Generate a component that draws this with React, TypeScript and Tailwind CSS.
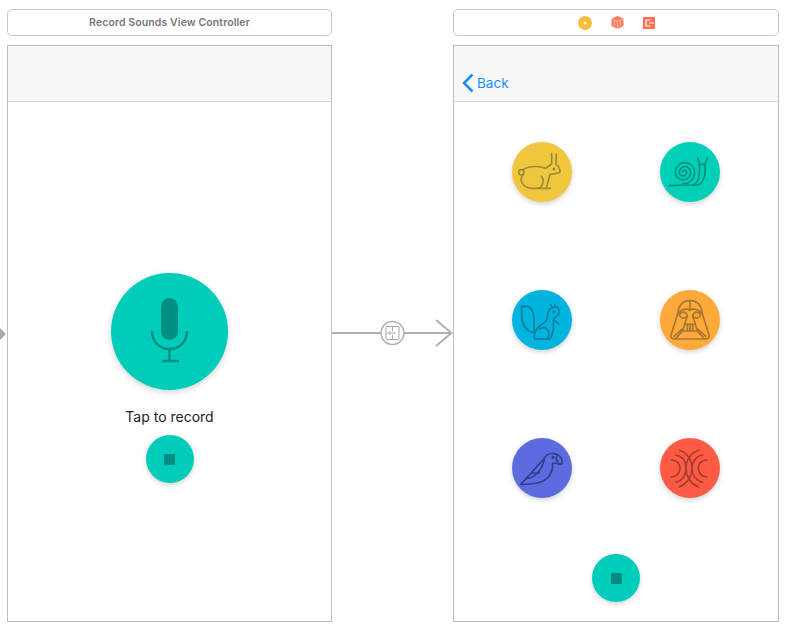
const font = { fontFamily: '"Inter", "Liberation Sans", sans-serif' };

type IconProps = { color: string };

function Rabbit({ color }: IconProps) {
  return (
    <svg viewBox="24 21 180 180" className="w-[60px] h-[60px]" fill="none" stroke={color} strokeWidth="5" strokeLinecap="round" strokeLinejoin="round">
      <circle cx="52" cy="112" r="8" />
      <path d="M58 104C75 92 105 92 125 100C132 96 138 90 143 87L143 55" />
      <path d="M157 58L156 88C164 93 168 102 168 112C158 116 148 118 138 118C134 128 132 148 126 160" />
      <path d="M58 118C44 135 55 160 85 160L140 160" />
      <path d="M112 124C122 136 118 152 104 160" />
      <circle cx="150" cy="102" r="2" />
    </svg>
  );
}

function Snail({ color }: IconProps) {
  return (
    <svg viewBox="24 21 180 180" className="w-[60px] h-[60px]" fill="none" stroke={color} strokeWidth="5" strokeLinecap="round" strokeLinejoin="round">
      <path d="M92 112A6 6 0 0 1 104 112A11 11 0 0 1 82 112A17 17 0 0 1 116 112A23 23 0 0 1 70 112A29 29 0 0 1 128 112C128 132 112 148 92 146" />
      <path d="M50 152L122 150C136 146 142 130 142 112C142 104 143 96 143 90L137 69" />
      <path d="M143 90C148 87 154 87 158 91L166 69" />
      <path d="M158 91C162 110 158 134 146 146C140 151 130 151 122 150" />
    </svg>
  );
}

function Squirrel({ color }: IconProps) {
  return (
    <svg viewBox="24 21 180 180" className="w-[60px] h-[60px]" fill="none" stroke={color} strokeWidth="5" strokeLinecap="round" strokeLinejoin="round">
      <path d="M53 70L70 70C86 74 92 98 90 128C90 136 90 142 92 150" />
      <path d="M53 70L53 100C55 125 68 145 92 150" />
      <path d="M92 168C88 150 96 132 125 116C132 108 130 90 135 82C140 74 150 71 162 73C168 84 166 96 158 100C150 104 148 108 148 114C150 132 148 150 138 168L92 168" />
      <path d="M106 138C126 124 142 146 130 168" />
      <path d="M150 112L163 122" />
      <path d="M143 72L140 65M153 71L152 64" />
      <circle cx="150" cy="87" r="2" />
    </svg>
  );
}

function Vader({ color }: IconProps) {
  return (
    <svg viewBox="24 21 180 180" className="w-[60px] h-[60px]" fill="none" stroke={color} strokeWidth="5" strokeLinecap="round" strokeLinejoin="round">
      <path d="M114 53C92 53 80 66 77 92L57 156C55 164 60 168 68 168L160 168C168 168 173 164 171 156L151 92C148 66 136 53 114 53Z" />
      <path d="M114 53L114 80M77 92C90 78 104 76 114 82C124 76 138 78 151 92" />
      <path d="M82 96C88 84 102 84 106 98C100 108 88 108 82 96ZM146 96C140 84 126 84 122 98C128 108 140 108 146 96Z" />
      <path d="M106 98L98 124L130 124L122 98" />
      <path d="M98 124L92 144L114 144L136 144L130 124" />
      <path d="M106 124L106 144M114 124L114 144M122 124L122 144" />
      <path d="M66 160L92 138M162 160L136 138M70 168L92 144M158 168L136 144" />
    </svg>
  );
}

function Parrot({ color }: IconProps) {
  return (
    <svg viewBox="24 21 180 180" className="w-[60px] h-[60px]" fill="none" stroke={color} strokeWidth="5" strokeLinecap="round" strokeLinejoin="round">
      <path d="M50 160L118 86C124 72 136 66 150 68C164 70 174 80 175 92C175 98 172 100 168 100C160 98 154 96 146 96C148 118 138 142 112 152C95 158 72 160 50 160Z" />
      <path d="M66 144C88 140 112 128 122 82" />
      <path d="M160 72C154 80 156 90 168 100" />
      <path d="M84 126L106 126" />
      <circle cx="147" cy="79" r="2.5" />
    </svg>
  );
}

function Waves({ color }: IconProps) {
  return (
    <svg viewBox="24 21 180 180" className="w-[60px] h-[60px]" fill="none" stroke={color} strokeWidth="5" strokeLinecap="round" strokeLinejoin="round">
      <path d="M58 87C76 87 84 100 84 112C84 126 74 138 58 138" />
      <path d="M70 72C94 76 102 94 102 112C102 130 94 148 72 154" />
      <path d="M82 58C106 66 120 88 120 112C120 136 106 158 82 168" />
      <path d="M165 87C147 87 139 100 139 112C139 126 149 138 165 138" />
      <path d="M152 72C130 76 120 94 120 112C120 130 130 148 152 154" />
      <path d="M140 58C116 66 102 88 102 112C102 136 116 158 140 168" />
    </svg>
  );
}

function StopButton() {
  return (
    <div className="w-12 h-12 rounded-full bg-[#00cdb9] shadow-[0_2px_5px_rgba(0,0,0,0.18)] flex items-center justify-center">
      <div className="w-[11px] h-[11px] bg-[#008c80]" />
    </div>
  );
}

function SoundButton({ bg, children }: { bg: string; children: React.ReactNode }) {
  return (
    <div className={`w-[60px] h-[60px] rounded-full ${bg} shadow-[0_2px_5px_rgba(0,0,0,0.18)]`}>
      {children}
    </div>
  );
}

export default function App() {
  return (
    <div className="w-[789px] h-[631px] bg-white flex pt-[9px] overflow-hidden" style={font}>
      <div className="w-[7px] mt-9 h-[577px] flex items-center">
        <svg width="7" height="14" viewBox="0 0 7 14">
          <path d="M0 1L6 7L0 13Z" fill="#a9a9a9" />
        </svg>
      </div>

      <div className="w-[325px] shrink-0">
        <div className="h-[27px] rounded-[5px] border border-[#c8c8c8] flex items-center justify-center text-[10.5px] font-semibold text-[#777777] tracking-[0.1px]">
          Record Sounds View Controller
        </div>
        <div className="mt-[9px] h-[577px] border border-[#bdbdbd] flex flex-col">
          <div className="h-[56px] bg-[#f8f8f8] border-b border-[#d4d4d4]" />
          <div className="flex flex-col items-center pt-[171px]">
            <div className="w-[117px] h-[117px] rounded-full bg-[#00cdb9] shadow-[0_2px_6px_rgba(0,0,0,0.18)] flex items-center justify-center">
              <svg width="117" height="117" viewBox="0 0 117 117" fill="none">
                <rect x="50" y="25" width="17" height="42" rx="8.5" fill="#008f82" />
                <path d="M41 58C41 69 49 76 58.5 76C68 76 76 69 76 58" stroke="#008f82" strokeWidth="2.5" />
                <path d="M58.5 76L58.5 87M51 88L68 88" stroke="#008f82" strokeWidth="2.5" />
              </svg>
            </div>
            <div className="mt-[17px] text-[14px] leading-[20px] text-[#222222]">Tap to record</div>
            <div className="mt-[8px]">
              <StopButton />
            </div>
          </div>
        </div>
      </div>

      <div className="w-[121px] shrink-0 mt-9 h-[577px] flex items-center">
        <svg width="121" height="30" viewBox="0 1 121 30" fill="none">
          <path d="M0 15L119 15M104 2L119.5 15L104 28" stroke="#b0b0b0" strokeWidth="2" />
          <circle cx="60.5" cy="15" r="11.5" fill="#ffffff" stroke="#b0b0b0" strokeWidth="1.5" />
          <rect x="54" y="8.5" width="13" height="13" rx="1" stroke="#a8a8a8" />
          <path d="M60.5 8.5L60.5 13M60.5 17L60.5 21.5M56.5 15L64 15M58.5 13L56.5 15L58.5 17M54 15L55.5 15" stroke="#a8a8a8" />
        </svg>
      </div>

      <div className="w-[326px] shrink-0">
        <div className="h-[27px] rounded-[5px] border border-[#c8c8c8] flex items-center justify-center gap-[19px]">
          <svg width="14" height="14" viewBox="0 0 14 14">
            <circle cx="7" cy="7" r="7" fill="#f7bd3f" />
            <circle cx="7" cy="7" r="1.5" fill="#ffffff" />
          </svg>
          <svg width="13" height="13" viewBox="0 0 13 13">
            <path d="M6.5 0L12.5 2.5L12.5 10L6.5 13L0.5 10L0.5 2.5Z" fill="#fb7a60" />
            <path d="M1 3L6.5 5.5L12 3M6.5 5.5L6.5 13M3.5 4.5L3.5 10M9.5 5L9.5 10" stroke="#ffc9bb" strokeWidth="0.8" fill="none" />
          </svg>
          <svg width="12" height="12" viewBox="0 0 12 12" fill="none">
            <rect width="12" height="12" fill="#fb6f54" />
            <path d="M7.5 3L3 3L3 9L7.5 9M6 6L11 6" stroke="#ffffff" strokeWidth="1.2" />
          </svg>
        </div>
        <div className="mt-[9px] h-[577px] border border-[#bdbdbd] flex flex-col">
          <div className="h-[56px] bg-[#f8f8f8] border-b border-[#d4d4d4] flex items-end pl-[8px] pb-[8px] gap-[3px]">
            <svg width="12" height="20" viewBox="0 0 12 20" fill="none">
              <path d="M10.5 1.5L2 10L10.5 18.5" stroke="#1a8cff" strokeWidth="2.5" />
            </svg>
            <span className="text-[13.5px] leading-[20px] text-[#1a8cff]">Back</span>
          </div>
          <div className="flex flex-col items-center pt-[40px]">
            <div className="grid grid-cols-[148px_148px] gap-y-[88px] justify-items-center">
              <SoundButton bg="bg-[#eec73f]"><Rabbit color="#a08a34" /></SoundButton>
              <SoundButton bg="bg-[#00d0b8]"><Snail color="#0b8f84" /></SoundButton>
              <SoundButton bg="bg-[#00b4df]"><Squirrel color="#0b7f9e" /></SoundButton>
              <SoundButton bg="bg-[#ffa93a]"><Vader color="#a9762f" /></SoundButton>
              <SoundButton bg="bg-[#5c6ce0]"><Parrot color="#343e8e" /></SoundButton>
              <SoundButton bg="bg-[#ff5a44]"><Waves color="#a83d30" /></SoundButton>
            </div>
            <div className="mt-[56px]">
              <StopButton />
            </div>
          </div>
        </div>
      </div>
    </div>
  );
}
